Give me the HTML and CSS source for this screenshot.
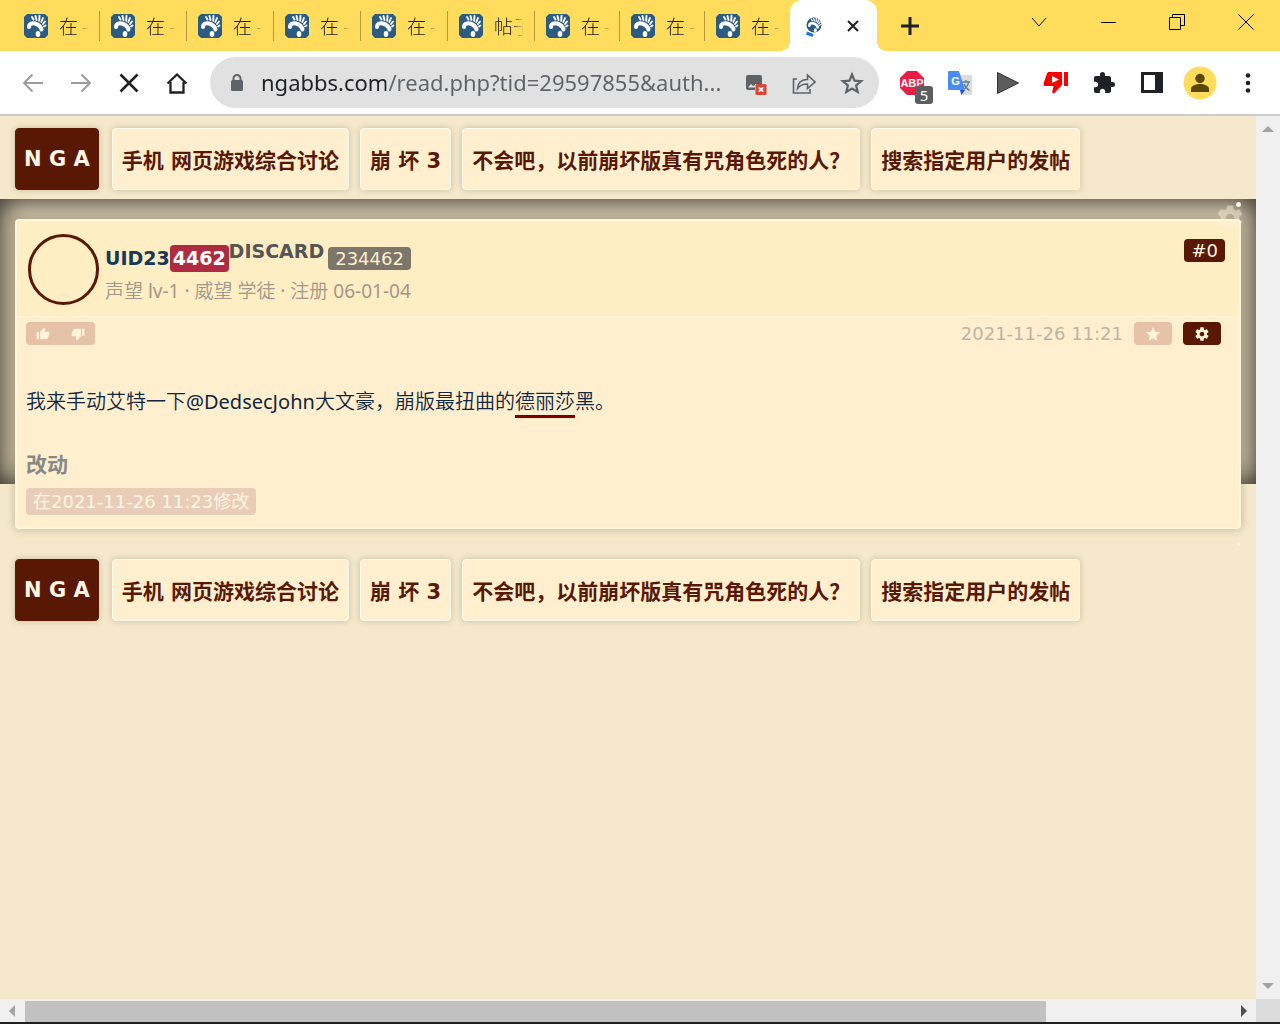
FILE: index.html
```
<!DOCTYPE html>
<html lang="zh-CN">
<head>
<meta charset="utf-8">
<title>不会吧，以前崩坏版真有咒角色死的人？</title>
<link rel="stylesheet" href="styles.css">
</head>
<body>
<svg class="defs" aria-hidden="true">
  <symbol id="foot" viewBox="0 0 24 24">
    <path d="M3 0h18l3 3v18l-3 3H3l-3-3V3z" fill="#2d5c83"/>
    <path d="M5 13C5 10 8 8.500 11 9.500c3.500 1.200 6 3.500 6.500 6" fill="none" stroke="#fff" stroke-width="4" stroke-linecap="round"/>
    <ellipse cx="14" cy="20" rx="2.300" ry="3" fill="#fff"/>
    <g stroke="#fff" stroke-width="1.900" stroke-linecap="round"><path d="M8 3l1.500 2.500M11.500 2l1 4M15.500 1.800l-.3 5M19 4l-1.700 4M21 7.500l-2 2.500M21.500 11.500l-1.500 1"/></g>
  </symbol>
  <symbol id="gear" viewBox="0 0 24 24">
    <path d="M19.430 12.980c.04-.32.070-.64.070-.98s-.03-.66-.07-.98l2.110-1.650c.19-.15.240-.42.120-.64l-2-3.460c-.12-.22-.39-.3-.61-.22l-2.490 1c-.52-.4-1.080-.73-1.690-.98l-.38-2.650C14.460 2.180 14.250 2 14 2h-4c-.25 0-.46.180-.49.420l-.38 2.650c-.61.250-1.170.590-1.690.980l-2.490-1c-.23-.09-.49 0-.61.220l-2 3.460c-.13.220-.07.490.120.640l2.110 1.650c-.04.320-.07.650-.07.980s.030.660.070.980l-2.110 1.650c-.19.150-.24.420-.12.640l2 3.460c.12.220.39.300.61.220l2.490-1c.52.400 1.080.730 1.690.980l.38 2.650c.03.240.24.420.49.420h4c.25 0 .46-.18.490-.42l.38-2.650c.61-.25 1.170-.59 1.690-.98l2.490 1c.23.090.49 0 .61-.22l2-3.460c.12-.22.070-.49-.12-.64l-2.110-1.650zM12 15.500c-1.930 0-3.500-1.570-3.500-3.500s1.570-3.500 3.500-3.500 3.500 1.570 3.500 3.500-1.570 3.500-3.500 3.500z" fill="currentColor"/>
  </symbol>
  <symbol id="thumb" viewBox="0 0 24 24">
    <path d="M1 21h4V9H1v12zm22-11c0-1.100-.9-2-2-2h-6.310l.95-4.570.03-.32c0-.41-.17-.79-.44-1.060L14.170 1 7.590 7.590C7.220 7.950 7 8.450 7 9v10c0 1.100.9 2 2 2h9c.83 0 1.540-.5 1.840-1.220l3.020-7.050c.09-.23.140-.47.140-.73v-2z" fill="currentColor"/>
  </symbol>
</svg>

<header class="browser">
  <div class="tabstrip">
    <nav class="tabs">
      <a class="tab" href="#"><svg><use href="#foot"/></svg><span>在 -</span></a>
      <a class="tab" href="#"><svg><use href="#foot"/></svg><span>在 -</span></a>
      <a class="tab" href="#"><svg><use href="#foot"/></svg><span>在 -</span></a>
      <a class="tab" href="#"><svg><use href="#foot"/></svg><span>在 -</span></a>
      <a class="tab" href="#"><svg><use href="#foot"/></svg><span>在 -</span></a>
      <a class="tab" href="#"><svg><use href="#foot"/></svg><span>帖子</span></a>
      <a class="tab narrow" href="#"><svg><use href="#foot"/></svg><span>在 -</span></a>
      <a class="tab narrow" href="#"><svg><use href="#foot"/></svg><span>在 -</span></a>
      <a class="tab narrow" href="#"><svg><use href="#foot"/></svg><span>在 -</span></a>
    </nav>
    <div class="tab-active">
      <svg width="18" height="22" viewBox="0 0 18 22"><defs><clipPath id="disc"><circle cx="10" cy="10" r="7.500"/></clipPath></defs><g clip-path="url(#disc)"><use href="#foot" x="2" y="2" width="16" height="16"/></g><path d="M2.500 18l6.500 2.500" stroke="#1a73e8" stroke-width="3"/></svg>
      <button class="plain" aria-label="关闭标签页"><svg width="12" height="12" viewBox="0 0 12 12"><path d="M1 1l10 10M11 1L1 11" stroke="#202124" stroke-width="2"/></svg></button>
    </div>
    <button class="plain newtab" aria-label="新标签页"><svg width="18" height="18" viewBox="0 0 18 18"><path d="M9 0v18M0 9h18" stroke="#202124" stroke-width="3"/></svg></button>
    <div class="window-buttons">
      <button class="plain" aria-label="搜索标签页"><svg width="16" height="16" viewBox="0 0 16 16"><path d="M1 4l7 8 7-8" fill="none" stroke="#111"/></svg></button>
      <button class="plain" aria-label="最小化"><svg width="16" height="16" viewBox="0 0 16 16"><path d="M1 8.500h15" stroke="#000"/></svg></button>
      <button class="plain" aria-label="还原"><svg width="16" height="16" viewBox="0 0 16 16"><path d="M.5 3.500h11v12H.5zM3.500 3V.5h12v11H12" fill="none" stroke="#000"/></svg></button>
      <button class="plain" aria-label="关闭"><svg width="16" height="16" viewBox="0 0 16 16"><path d="M.5.500l15 15M15.500.500l-15 15" stroke="#000"/></svg></button>
    </div>
  </div>
  <div class="toolbar">
    <button class="plain" aria-label="后退"><svg width="24" height="24" viewBox="0 0 24 24"><path d="M22 12H3M11.500 3.500L3 12l8.500 8.500" fill="none" stroke="#9a9c9f" stroke-width="2"/></svg></button>
    <button class="plain" aria-label="前进"><svg width="24" height="24" viewBox="0 0 24 24"><path d="M2 12h19M12.500 3.500L21 12l-8.500 8.500" fill="none" stroke="#9a9c9f" stroke-width="2"/></svg></button>
    <button class="plain" aria-label="停止"><svg width="24" height="24" viewBox="0 0 24 24"><path d="M3.500 3.500l17 17M20.500 3.500l-17 17" stroke="#202124" stroke-width="2.500"/></svg></button>
    <button class="plain" aria-label="主页"><svg width="24" height="24" viewBox="0 0 24 24"><path d="M2.500 12.500L12 3.500l9.500 9M5.500 11v10.500h13V11" fill="none" stroke="#202124" stroke-width="2.300"/></svg></button>
    <form class="omnibox">
      <svg width="14" height="18" viewBox="0 0 14 18"><path d="M3.500 7V4.500a3.500 3.500 0 017 0V7" fill="none" stroke="#5f6368" stroke-width="2"/><rect x="1" y="6" width="12" height="11" rx="1.500" fill="#5f6368"/></svg>
      <input class="url" type="text" aria-label="地址" value="ngabbs.com/read.php?tid=29597855&amp;auth...">
      <button class="plain" type="button" aria-label="图片已拦截"><svg width="24" height="24" viewBox="0 0 24 24"><path d="M4 4h12a2 2 0 012 2v7h-7v6H4a2 2 0 01-2-2V6a2 2 0 012-2z" fill="#5f6368"/><path d="M4 16.500l3-3.500 2 2 2-1v2.500z" fill="#e1e1e1"/><rect x="11.500" y="13" width="11" height="11" rx="1.500" fill="#db4437"/><path d="M14.800 16.300l4.400 4.400M19.200 16.300l-4.400 4.400" stroke="#fff" stroke-width="1.700"/></svg></button>
      <button class="plain" type="button" aria-label="分享"><svg width="24" height="24" viewBox="0 0 24 24"><path d="M5 8H1.500v14h16.500v-4M5.500 17.500C6 11 10 8.500 15.500 8.500V4l7.500 7-7.500 6.500v-4.500C11 13 8 14 5.500 17.500z" fill="none" stroke="#5f6368" stroke-width="1.600"/></svg></button>
      <button class="plain" type="button" aria-label="收藏"><svg width="24" height="24" viewBox="0 0 24 24"><path d="M12 3.500l2.500 6.200 6.700.5-5.100 4.300 1.600 6.500L12 17.500 6.300 21l1.600-6.500-5.100-4.300 6.700-.5z" fill="none" stroke="#5f6368" stroke-width="2.200"/></svg></button>
    </form>
    <button class="plain ext" aria-label="广告拦截"><svg width="24" height="24" viewBox="0 0 24 24"><path d="M7 0h10l7 7v10l-7 7H7l-7-7V7z" fill="#ed1e45"/><text x="12" y="16" text-anchor="middle" class="glyph">ABP</text></svg><span class="count">5</span></button>
    <button class="plain" aria-label="翻译"><svg width="24" height="24" viewBox="0 0 24 24"><path d="M8 4h15a1 1 0 011 1v18a1 1 0 01-1 1H13z" fill="#dcdcdc"/><path d="M14 11h8M18 9v2M20.500 11c-.5 4-3 6.500-5.500 8M16 13c1 3 3 5 5.500 6.500" fill="none" stroke="#607d8b" stroke-width="1.400"/><path d="M1 0h10l6 19H1a1 1 0 01-1-1V1a1 1 0 011-1z" fill="#4a8cf5"/><path d="M12 19h5l-3.500 5z" fill="#1f50c8"/><text x="7.500" y="14" text-anchor="middle" class="glyph">G</text></svg></button>
    <button class="plain" aria-label="播放"><svg width="24" height="24" viewBox="0 0 24 24"><path d="M1.500 1.500L22.500 12l-21 10.500z" fill="#5c5c5c" stroke="#333"/></svg></button>
    <button class="plain" aria-label="踩"><svg width="26" height="24" viewBox="0 0 26 24"><path d="M5 1h14v13l-8 8.500c-2 0-2-1.500-1.500-3L10.500 15H2.500C0 15 .5 12.500 1 11L4 2.500zM21 1h4v14h-4z" fill="#f00"/><path d="M9 5l7 3.500L9 12z" fill="#fff"/></svg></button>
    <button class="plain" aria-label="扩展程序"><svg width="24" height="24" viewBox="0 0 24 24"><path d="M20.500 11H19V7c0-1.100-.9-2-2-2h-4V3.500a2.500 2.500 0 00-5 0V5H4c-1.100 0-2 .9-2 2v3.800h1.500c1.500 0 2.700 1.200 2.700 2.700S5 16.200 3.500 16.200H2V20c0 1.100.9 2 2 2h3.800v-1.500c0-1.500 1.200-2.700 2.700-2.700s2.700 1.200 2.700 2.700V22H17c1.100 0 2-.9 2-2v-4h1.500a2.500 2.500 0 000-5z" fill="#202124"/></svg></button>
    <button class="plain" aria-label="侧边栏"><svg width="22" height="22" viewBox="0 0 22 22"><path d="M0 0h22v21H0z" fill="#202124"/><path d="M3 3h11v15H3z" fill="#fff"/></svg></button>
    <button class="plain" aria-label="用户"><svg width="34" height="34" viewBox="0 0 34 34"><circle cx="17" cy="17" r="16.500" fill="#ffdc5c"/><circle cx="17" cy="12.500" r="4.700" fill="#5c4700"/><path d="M8 26v-3c0-3.500 5-5 9-5s9 1.500 9 5v3z" fill="#5c4700"/></svg></button>
    <button class="plain" aria-label="菜单"><svg width="6" height="20" viewBox="0 0 6 20"><g fill="#202124"><circle cx="3" cy="2.500" r="2.300"/><circle cx="3" cy="10" r="2.300"/><circle cx="3" cy="17.500" r="2.300"/></g></svg></button>
  </div>
</header>

<div class="viewport">
  <main class="page">
    <nav class="crumbs">
      <a class="crumb home" href="#">N G A</a>
      <a class="crumb" href="#">手机 网页游戏综合讨论</a>
      <a class="crumb" href="#">崩 坏 3</a>
      <a class="crumb" href="#">不会吧，以前崩坏版真有咒角色死的人？</a>
      <a class="crumb" href="#">搜索指定用户的发帖</a>
    </nav>
    <section class="band">
      <article class="post">
        <header class="author">
          <span class="avatar"></span>
          <div class="who">
            <div class="names"><a class="uid" href="#">UID23<b>4462</b></a><span class="discard">DISCARD</span><span class="tag">234462</span></div>
            <div class="stats">声望 lv-1 · 威望 学徒 · 注册 06-01-04</div>
          </div>
          <a class="floor" href="#">#0</a>
        </header>
        <div class="actions">
          <div class="pill votes">
            <button class="plain" aria-label="支持"><svg width="14" height="14"><use href="#thumb"/></svg></button>
            <button class="plain down" aria-label="反对"><svg width="14" height="14"><use href="#thumb"/></svg></button>
          </div>
          <time>2021-11-26 11:21</time>
          <button class="plain pill" aria-label="收藏"><svg width="14" height="14" viewBox="0 0 24 24"><path d="M12 0l3.600 8.300 8.400.8-6.400 6 2 8.900-7.600-4.700L4.400 24l2-8.900L0 9.100l8.400-.8z" fill="currentColor"/></svg></button>
          <button class="plain pill dark" aria-label="设置"><svg width="16" height="16"><use href="#gear"/></svg></button>
        </div>
        <p class="content">我来手动艾特一下@DedsecJohn大文豪，崩版最扭曲的<a href="#">德丽莎</a>黑。</p>
        <h4 class="edits">改动</h4>
        <span class="edited">在2021-11-26 11:23修改</span>
      </article>
      <svg class="float-gear" width="30" height="30"><use href="#gear"/></svg>
      <i class="dot top"></i>
      <i class="dot bottom"></i>
    </section>
    <nav class="crumbs">
      <a class="crumb home" href="#">N G A</a>
      <a class="crumb" href="#">手机 网页游戏综合讨论</a>
      <a class="crumb" href="#">崩 坏 3</a>
      <a class="crumb" href="#">不会吧，以前崩坏版真有咒角色死的人？</a>
      <a class="crumb" href="#">搜索指定用户的发帖</a>
    </nav>
  </main>
  <div class="vbar">
    <svg width="12" height="6"><path d="M0 6l6-6 6 6z" fill="#a3a3a3"/></svg>
    <svg width="12" height="6"><path d="M0 0l6 6 6-6z" fill="#a3a3a3"/></svg>
  </div>
</div>
<footer class="hbar">
  <svg width="6" height="12"><path d="M6 0L0 6l6 6z" fill="#a3a3a3"/></svg>
  <div class="track"><div class="thumb"></div></div>
  <svg width="6" height="12"><path d="M0 0l6 6-6 6z" fill="#505050"/></svg>
  <span class="corner"></span>
</footer>
</body>
</html>
```

FILE: styles.css
```
* { box-sizing: border-box; }
body {
  margin: 0;
  min-height: 100vh;
  display: flex;
  flex-direction: column;
  background: #f5e8cb;
  font-family: "DejaVu Sans", "Noto Sans CJK SC", sans-serif;
  overflow: hidden;
}
a { color: inherit; text-decoration: none; }
svg { display: block; flex: none; }
.defs { position: absolute; width: 0; height: 0; }
.plain {
  border: 0;
  padding: 0;
  background: none;
  color: inherit;
  display: flex;
  align-items: center;
  justify-content: center;
}

/* tab strip */
.tabstrip {
  display: flex;
  height: 51px;
  background: #ffdc5c;
}
.tabs { display: flex; align-items: center; padding-left: 13px; }
.tab {
  display: flex;
  align-items: center;
  gap: 11px;
  width: 87px;
  height: 30px;
  padding-left: 11px;
  border-right: 1px solid #b39a41;
  font: 300 19px "Noto Sans CJK SC", sans-serif;
  color: #202124;
}
.tab.narrow { width: 85px; }
.tab:last-child { border-color: transparent; }
.tab svg { width: 24px; height: 24px; }
.tab span {
  overflow: hidden;
  white-space: nowrap;
  width: 31px;
  -webkit-mask-image: linear-gradient(90deg, #000 55%, transparent 95%);
  mask-image: linear-gradient(90deg, #000 55%, transparent 95%);
}
.tab-active {
  position: relative;
  display: flex;
  align-items: center;
  justify-content: space-between;
  width: 87px;
  padding: 0 18px 0 14px;
  background: #fff;
  border-radius: 12px 12px 0 0;
}
.tab-active::before,
.tab-active::after {
  content: "";
  position: absolute;
  bottom: 0;
  width: 10px;
  height: 10px;
}
.tab-active::before { right: 100%; background: radial-gradient(circle at 0 0, transparent 10px, #fff 10px); }
.tab-active::after { left: 100%; background: radial-gradient(circle at 100% 0, transparent 10px, #fff 10px); }
.newtab { width: 66px; }
.window-buttons { display: flex; height: 43px; margin-left: auto; }
.window-buttons .plain { width: 69px; }

/* toolbar */
.toolbar {
  display: flex;
  align-items: center;
  height: 65px;
  padding: 0 8px 0 9px;
  background: #fff;
  border-bottom: 2px solid #cacccf;
}
.toolbar > .plain { width: 48px; height: 48px; }
.omnibox {
  flex: 1;
  display: flex;
  align-items: center;
  height: 51px;
  margin: 0 9px;
  padding: 0 3px 0 20px;
  background: #e1e1e1;
  border-radius: 26px;
}
.omnibox .plain { width: 48px; height: 48px; }
.url {
  flex: 1;
  min-width: 0;
  margin-left: 17px;
  padding: 0 0 2px;
  border: 0;
  outline: 0;
  font: 22px "Noto Sans", sans-serif;
  color: transparent;
  background: linear-gradient(90deg, #202124 125px, #5f6368 125px);
  -webkit-background-clip: text;
  background-clip: text;
}
.ext { position: relative; }
.glyph { font: bold 11px "Liberation Sans", sans-serif; fill: #fff; }
.count {
  position: absolute;
  right: 3px;
  bottom: 3px;
  width: 18px;
  height: 18px;
  border-radius: 3px;
  background: #5e5e5e;
  color: #fff;
  font: 15px/18px "Noto Sans", sans-serif;
}

/* forum page */
.viewport { flex: 1; display: flex; }
.page { flex: 1; min-width: 0; }
.crumbs { display: flex; gap: 11px; padding: 12px 15px 9px; }
.crumb {
  display: flex;
  align-items: center;
  height: 62px;
  padding: 0 9px;
  border: 1px solid #fffbee;
  border-radius: 4px;
  background: #ffefce;
  box-shadow: 0 0 6px rgba(80, 60, 20, .25);
  color: #591804;
  font-weight: 700;
  font-size: 21px;
  white-space: nowrap;
}
.crumb.home { padding: 0 8px; background: #591804; border-color: #591804; color: #fff6e6; margin-right: 2px; }
.band { position: relative; padding: 20px 15px; }
.band::before {
  content: "";
  position: absolute;
  inset: 0 0 65px;
  background: #d8ccb2;
  box-shadow: inset 0 0 28px #222018;
}
.post {
  position: relative;
  min-height: 310px;
  border: 2px solid #fff7df;
  border-radius: 4px;
  background: #ffefce;
  box-shadow: 0 0 8px rgba(80, 60, 20, .3);
}
.author {
  display: flex;
  gap: 6px;
  height: 96px;
  padding: 13px 14px 0 11px;
  background: #ffedc4;
  border-bottom: 1px solid #fff3d6;
}
.avatar { width: 71px; height: 71px; border: 3px solid #591804; border-radius: 50%; flex: none; }
.names {
  display: flex;
  align-items: center;
  height: 42px;
  padding-top: 6px;
  font-size: 19px;
  font-weight: 700;
}
.uid { color: #163a56; display: flex; align-items: center; }
.uid b { padding: 0 3px; line-height: 27px; border-radius: 4px; background: #ae2c42; color: #fff; }
.discard { align-self: flex-start; color: #555; line-height: 22px; }
.tag { margin-left: 4px; padding: 0 7px; line-height: 23px; border-radius: 4px; background: #7d766b; color: #ffefce; font-size: 18px; font-weight: 400; }
.stats { color: #a1998a; font: 19px/30px "Noto Sans", "Noto Sans CJK SC DemiLight", "Noto Sans CJK SC", sans-serif; white-space: nowrap; }
.floor { margin: 5px 0 0 auto; height: 23px; padding: 0 7px; border-radius: 4px; background: #591804; color: #fff6e6; font-size: 18px; line-height: 23px; }
.actions { display: flex; align-items: center; height: 33px; padding: 0 18px 0 9px; }
.pill { height: 23px; width: 38px; border-radius: 4px; background: #e6c2a9; color: #fff3dc; }
.votes { display: flex; width: 69px; }
.votes .plain { flex: 1; }
.down svg { transform: rotate(180deg); }
.actions time { margin: 0 11px 0 auto; font-size: 18px; color: #bcb5a6; }
.pill.dark { margin-left: 11px; background: #591804; }
.content {
  margin: 37px 0 0 9px;
  color: #10273f;
  font: 20px/30px "Noto Sans", "Noto Sans CJK SC DemiLight", "Noto Sans CJK SC", sans-serif;
}
.content a { border-bottom: 3px solid #800000; display: inline-block; line-height: 26px; }
.edits { margin: 32px 9px 8px; color: #888; font-size: 21px; line-height: 30px; }
.edited { display: inline-block; margin-left: 9px; padding: 0 7px; border-radius: 4px; background: #e9cdb8; color: #fff5e2; font-size: 18px; line-height: 27px; }
.float-gear { position: absolute; top: 4px; right: 11px; color: #fff6e0; opacity: .45; }
.dot { position: absolute; border-radius: 50%; background: #fff6e0; }
.dot.top { top: 3px; right: 15px; width: 5px; height: 5px; }
.dot.bottom { bottom: 3px; right: 16px; width: 3px; height: 3px; }
.band + .crumbs { padding-top: 10px; }

/* scroll bars */
.vbar {
  display: flex;
  flex-direction: column;
  align-items: center;
  justify-content: space-between;
  width: 24px;
  padding: 10px 0;
  background: #f0f0f0;
}
.hbar {
  display: flex;
  align-items: center;
  height: 25px;
  padding-left: 9px;
  background: #f0f0f0;
  border-bottom: 2px solid #231f20;
}
.track { flex: 1; height: 21px; margin: 2px 0 0 10px; }
.thumb { width: 84%; height: 100%; background: #c1c1c1; }
.corner { width: 24px; height: 23px; margin-left: 9px; background: #dcdcdc; }
```
